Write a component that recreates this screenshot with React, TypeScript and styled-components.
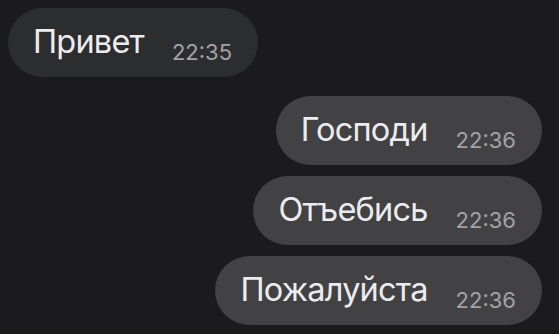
import React from "react";
import styled, { createGlobalStyle } from "styled-components";

const Global = createGlobalStyle`
  html, body {
    margin: 0;
    padding: 0;
    background: #1b1b1d;
  }
  body {
    font-family: Inter, "Noto Sans", sans-serif;
    -webkit-font-smoothing: antialiased;
  }
`;

const Chat = styled.div`
  width: 559px;
  height: 334px;
  box-sizing: border-box;
  padding: 8px 17px 0 8px;
  display: flex;
  flex-direction: column;
  background: #1b1b1d;
  overflow: hidden;
`;

const Bubble = styled.div<{ $out?: boolean; $gap: number }>`
  align-self: ${(p) => (p.$out ? "flex-end" : "flex-start")};
  margin-top: ${(p) => p.$gap}px;
  height: 69px;
  box-sizing: border-box;
  padding: 14px 26px 0 25px;
  border-radius: 35px;
  background: ${(p) => (p.$out ? "#424244" : "#2c2d2f")};
  display: flex;
  align-items: baseline;
  gap: 28px;
`;

const Text = styled.span`
  font-size: 32.5px;
  line-height: 40px;
  color: #ececee;
  letter-spacing: -0.8px;
`;

const Time = styled.span`
  font-size: 22px;
  line-height: 22px;
  color: #a3a3a6;
  position: relative;
  top: 7px;
`;

const messages = [
  { text: "Привет", time: "22:35", out: false, gap: 0 },
  { text: "Господи", time: "22:36", out: true, gap: 19 },
  { text: "Отъебись", time: "22:36", out: true, gap: 11 },
  { text: "Пожалуйста", time: "22:36", out: true, gap: 11 },
];

export default function App() {
  return (
    <>
      <Global />
      <Chat>
        {messages.map((m, i) => (
          <Bubble key={i} $out={m.out} $gap={m.gap}>
            <Text>{m.text}</Text>
            <Time>{m.time}</Time>
          </Bubble>
        ))}
      </Chat>
    </>
  );
}
